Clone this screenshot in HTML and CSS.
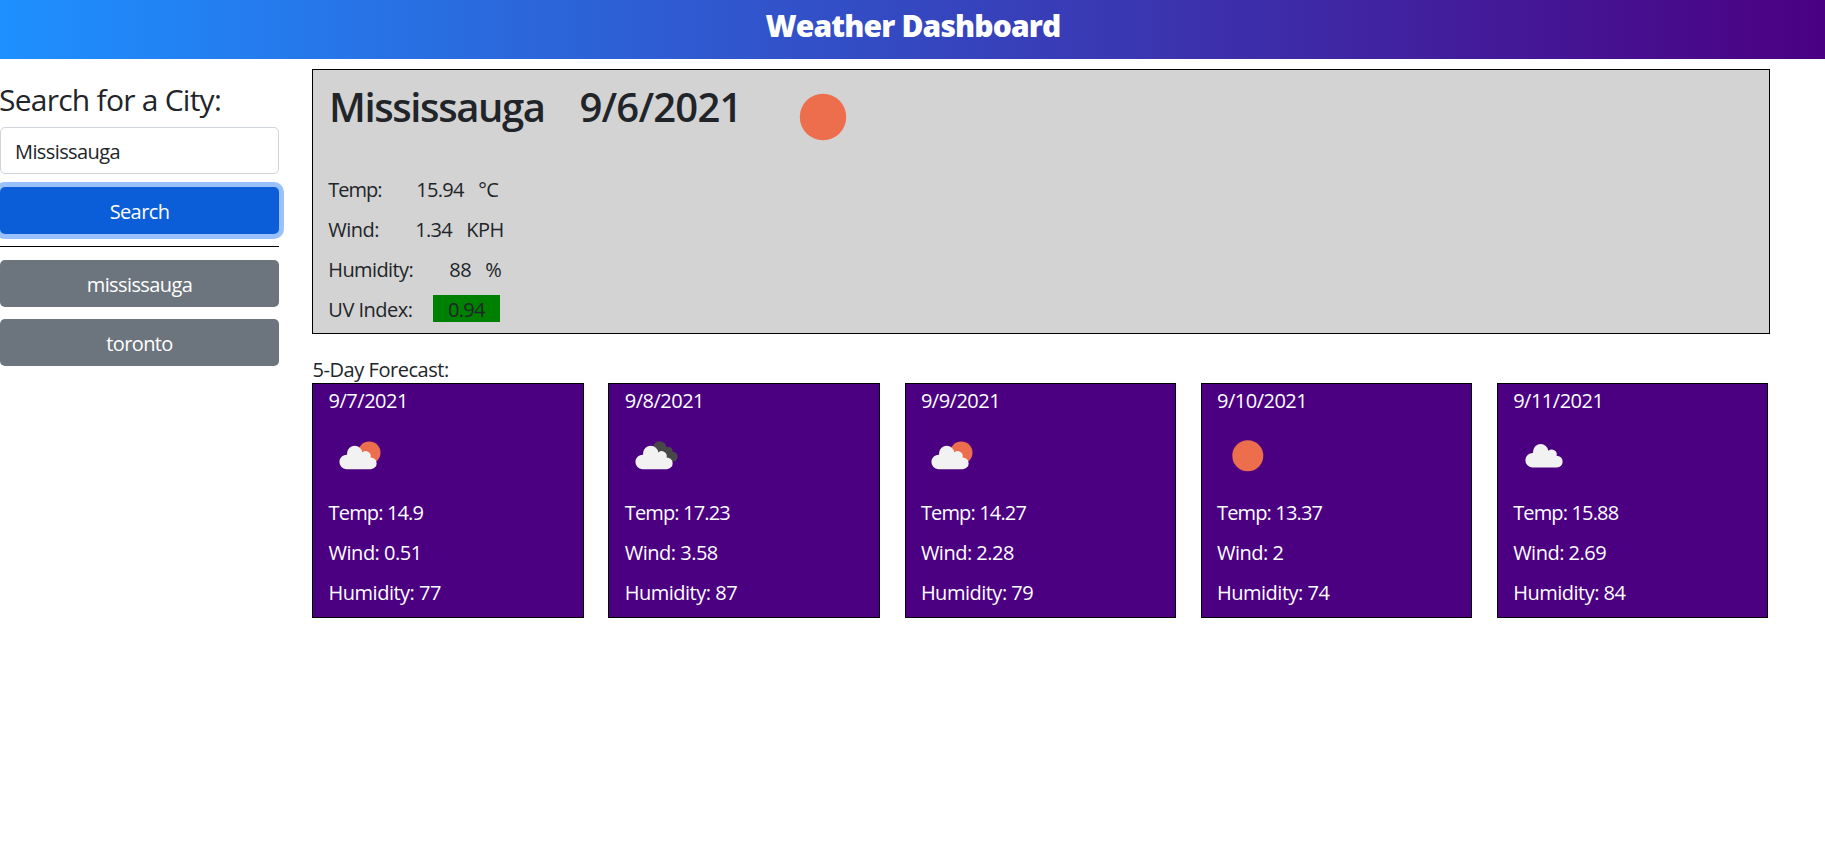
FILE: index.html
```html
<!DOCTYPE html>
<html lang="en">
<head>
<meta charset="utf-8">
<title>Weather Dashboard</title>
<link rel="stylesheet" href="styles.css">
</head>
<body>
<svg class="defs" width="0" height="0" aria-hidden="true">
  <defs>
    <path id="cloud" d="M18.2 45.2A7.2 7.2 0 1 1 19.1 30.7V28.7A7.7 7.7 0 0 1 34.4 28.5A5 5 0 0 1 42.6 33.4A5.9 5.9 0 0 1 42.9 45.2Z"/>
  </defs>
</svg>
<header class="topbar"><h1 class="title">Weather Dashboard</h1></header>
<main class="layout">
  <aside class="sidebar">
    <h2 class="sidebar-title">Search for a City:</h2>
    <input class="city-input" type="text" value="Mississauga">
    <button class="btn btn-primary">Search</button>
    <hr class="rule">
    <button class="btn">mississauga</button>
    <button class="btn">toronto</button>
  </aside>
  <section class="content">
    <div class="current">
      <div class="current-head">
        <h2 class="city">Mississauga</h2>
        <h2 class="date">9/6/2021</h2>
        <svg class="sun-big" viewBox="0 0 94 94"><circle cx="47" cy="47" r="23.2" fill="#ec6e4c"/></svg>
      </div>
      <p class="row temp"><span class="label">Temp:</span><span class="value">15.94</span><span>°C</span></p>
      <p class="row wind"><span class="label">Wind:</span><span class="value">1.34</span><span>KPH</span></p>
      <p class="row humidity"><span class="label">Humidity:</span><span class="value">88</span><span>%</span></p>
      <p class="row uv"><span class="label">UV Index:</span><span class="uv-value">0.94</span></p>
    </div>
    <div class="forecast-label">5-Day Forecast:</div>
    <div class="forecast">
      <article class="card">
        <p>9/7/2021</p>
        <svg class="icon" viewBox="0 0 62 62"><circle cx="41.3" cy="28.7" r="11.2" fill="#ec6e4c"/><use href="#cloud" fill="#f2f2f2"/></svg>
        <p class="t">Temp: 14.9</p><p>Wind: 0.51</p><p>Humidity: 77</p>
      </article>
      <article class="card">
        <p>9/8/2021</p>
        <svg class="icon" viewBox="0 0 62 62"><g fill="#484848"><circle cx="35.7" cy="24.2" r="6.9"/><circle cx="44.4" cy="27.2" r="4.1"/><circle cx="48.6" cy="32.7" r="5"/><path d="M35 24H44L48 37.6H38Z"/></g><use href="#cloud" fill="#f2f2f2"/></svg>
        <p class="t">Temp: 17.23</p><p>Wind: 3.58</p><p>Humidity: 87</p>
      </article>
      <article class="card">
        <p>9/9/2021</p>
        <svg class="icon" viewBox="0 0 62 62"><circle cx="41.3" cy="28.7" r="11.2" fill="#ec6e4c"/><use href="#cloud" fill="#f2f2f2"/></svg>
        <p class="t">Temp: 14.27</p><p>Wind: 2.28</p><p>Humidity: 79</p>
      </article>
      <article class="card">
        <p>9/10/2021</p>
        <svg class="icon" viewBox="0 0 62 62"><circle cx="31.8" cy="31.8" r="15.5" fill="#ec6e4c"/></svg>
        <p class="t">Temp: 13.37</p><p>Wind: 2</p><p>Humidity: 74</p>
      </article>
      <article class="card">
        <p>9/11/2021</p>
        <svg class="icon" viewBox="0 0 62 62"><use href="#cloud" x="2" y="-1.7" fill="#f2f2f2"/></svg>
        <p class="t">Temp: 15.88</p><p>Wind: 2.69</p><p>Humidity: 84</p>
      </article>
    </div>
  </section>
</main>
</body>
</html>
```
FILE: styles.css
```css
* { box-sizing: border-box; }
body {
  margin: 0;
  background: #fff;
  color: #212529;
  font: 400 20px/30px "Open Sans", "Noto Sans", sans-serif;
  letter-spacing: -0.5px;
}
h1, h2, p { margin: 0; }
.defs { display: block; }
.topbar {
  height: 59px;
  padding-top: 8px;
  background: linear-gradient(to right, dodgerblue, indigo);
  text-align: center;
}
.title { color: #fff; font-size: 30px; line-height: 36px; font-weight: 800; letter-spacing: -0.85px; padding-left: 1px; }
.layout { display: flex; align-items: flex-start; gap: 33px; }
.sidebar { width: 279px; padding-top: 23px; display: flex; flex-direction: column; }
.sidebar-title { font-size: 30px; line-height: 36px; font-weight: 400; letter-spacing: -0.75px; margin: 0 0 9px -1px; }
.city-input {
  height: 47px;
  width: 100%;
  padding: 2px 14px 0;
  border: 1px solid #ced4da;
  border-radius: 5px;
  color: inherit;
  font: inherit;
  letter-spacing: -0.6px;
}
.btn {
  height: 47px;
  margin-bottom: 12px;
  padding: 2px 0 0;
  border: 0;
  border-radius: 5px;
  background: #6c757d;
  color: #fff;
  font: inherit;
  letter-spacing: -0.6px;
}
.btn-primary { margin: 13px 0 0; background: #0b5ed7; box-shadow: 0 0 0 5px #98c1fe; }
.rule { width: 100%; height: 1px; margin: 12px 0 13px; border: 0; background: #000; }
.content { width: 1458px; padding-top: 10px; }
.current { height: 265px; border: 1px solid #000; background: lightgray; padding-left: 15.3px; }
.current-head { display: flex; height: 105px; padding: 13px 0 0 0.7px; }
.current-head h2 { font-size: 40px; line-height: 48px; font-weight: 600; }
.city { width: 250.5px; letter-spacing: -1.4px; }
.date { width: 197px; letter-spacing: -0.8px; }
.sun-big { width: 94px; height: 94px; margin-top: -13px; }
.row { display: flex; height: 30px; margin-bottom: 10px; }
.row .label, .row .value { flex: none; }
.temp .label { width: 88px; letter-spacing: -1px; }
.temp .value { width: 62px; letter-spacing: -0.7px; }
.wind .label { width: 87px; }
.wind .value { width: 51px; letter-spacing: -0.7px; }
.humidity .label { width: 121px; letter-spacing: -0.6px; }
.humidity .value { width: 36px; }
.uv { align-items: flex-start; }
.uv .label { width: 104.7px; }
.uv-value { width: 67px; height: 27px; line-height: 29px; padding-left: 15px; background: green; letter-spacing: -0.7px; }
.forecast-label { margin-top: 22px; height: 27px; line-height: 28px; letter-spacing: -0.45px; padding-left: 0.5px; }
.forecast { display: flex; gap: 24.75px; padding-left: 0.3px; }
.card {
  width: 271.4px;
  height: 235px;
  padding: 2px 0 0 15.3px;
  border: 1px solid #000;
  background: indigo;
  color: #fff;
}
.card p { margin-bottom: 10px; letter-spacing: -0.5px; }
.card .t { letter-spacing: -0.85px; }
.icon { display: block; width: 62px; height: 62px; margin: -2px 0 12px -0.8px; }
```
